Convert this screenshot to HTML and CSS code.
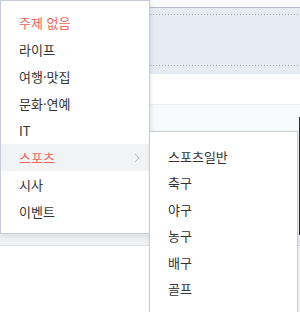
FILE: index.html
```html
<!DOCTYPE html>
<html lang="ko">
<head>
  <meta charset="UTF-8" />
  <meta name="viewport" content="width=device-width, initial-scale=1.0" />
  <title>주제 선택</title>
  <link rel="stylesheet" href="styles.css">
</head>
<body>
  <div class="page">
    <div class="topbar"></div>
    <div class="editor">
      <div class="dots"></div>
      <div class="dots"></div>
    </div>
    <div class="blank"></div>
    <div class="toolrow">
      <span class="edge"></span>
    </div>
    <div class="footbar"></div>
  </div>

  <ul class="menu">
    <li class="item red">주제 없음</li>
    <li class="item">라이프</li>
    <li class="item">여행·맛집</li>
    <li class="item">문화·연예</li>
    <li class="item">IT</li>
    <li class="item red active">스포츠
      <svg class="chev" width="6" height="10" viewBox="0 0 6 10"><path d="M1 1l4 4-4 4" fill="none" stroke="#b5bac2" stroke-width="1"/></svg>
    </li>
    <li class="item">시사</li>
    <li class="item">이벤트</li>
  </ul>

  <ul class="submenu">
    <li class="item">스포츠일반</li>
    <li class="item">축구</li>
    <li class="item">야구</li>
    <li class="item">농구</li>
    <li class="item">배구</li>
    <li class="item">골프</li>
  </ul>
</body>
</html>
```

FILE: styles.css
```css
html, body {
  height: 312px;
  overflow: hidden;
}
body {
  margin: 0;
  font-family: "Noto Sans CJK KR", "Noto Sans", sans-serif;
  font-size: 13px;
  color: #333;
  background: #fff;
}
ul {
  list-style: none;
  margin: 0;
  padding: 0;
}
.page {
  width: 300px;
  height: 312px;
  overflow: hidden;
}
.topbar {
  height: 7px;
  background: #fafafa;
  border-bottom: 1px solid #b4bac4;
}
.editor {
  height: 66px;
  background: #e6eaf3;
  padding-top: 6px;
  box-sizing: border-box;
}
.dots {
  height: 1px;
  background-image: repeating-linear-gradient(to right, #a3a8b1 0 1px, transparent 1px 3px);
}
.dots + .dots {
  margin-top: 50px;
}
.blank {
  height: 30px;
}
.toolrow {
  height: 130px;
  background: #f8f9fb;
  border-top: 1px solid #eceef3;
  display: flex;
  justify-content: flex-end;
}
.edge {
  width: 1px;
  margin-top: 12px;
  background: #2a2a2a;
}
.footbar {
  height: 10px;
  background: #eef0f2;
  border-bottom: 1px solid #dcdfe4;
}
.menu {
  position: absolute;
  left: 0;
  top: 0;
  width: 148px;
  padding: 8px 0;
  background: #fff;
  border: 1px solid #c6cdd8;
  box-shadow: 1px 2px 4px rgba(40, 50, 70, 0.12);
}
.menu .item {
  height: 27px;
  line-height: 27px;
  padding-left: 18px;
  display: flex;
  align-items: center;
}
.red {
  color: #f0655c;
}
.active {
  background: #f2f3f5;
}
.chev {
  margin-left: auto;
  margin-right: 9px;
}
.submenu {
  position: absolute;
  left: 149px;
  top: 131px;
  width: 149px;
  height: 181px;
  box-sizing: border-box;
  padding-top: 12px;
  background: #fff;
  border: 1px solid #c6cdd8;
  border-bottom: none;
  box-shadow: 1px 2px 4px rgba(40, 50, 70, 0.12);
}
.submenu .item {
  height: 26.4px;
  line-height: 26.4px;
  padding-left: 18px;
}
```
